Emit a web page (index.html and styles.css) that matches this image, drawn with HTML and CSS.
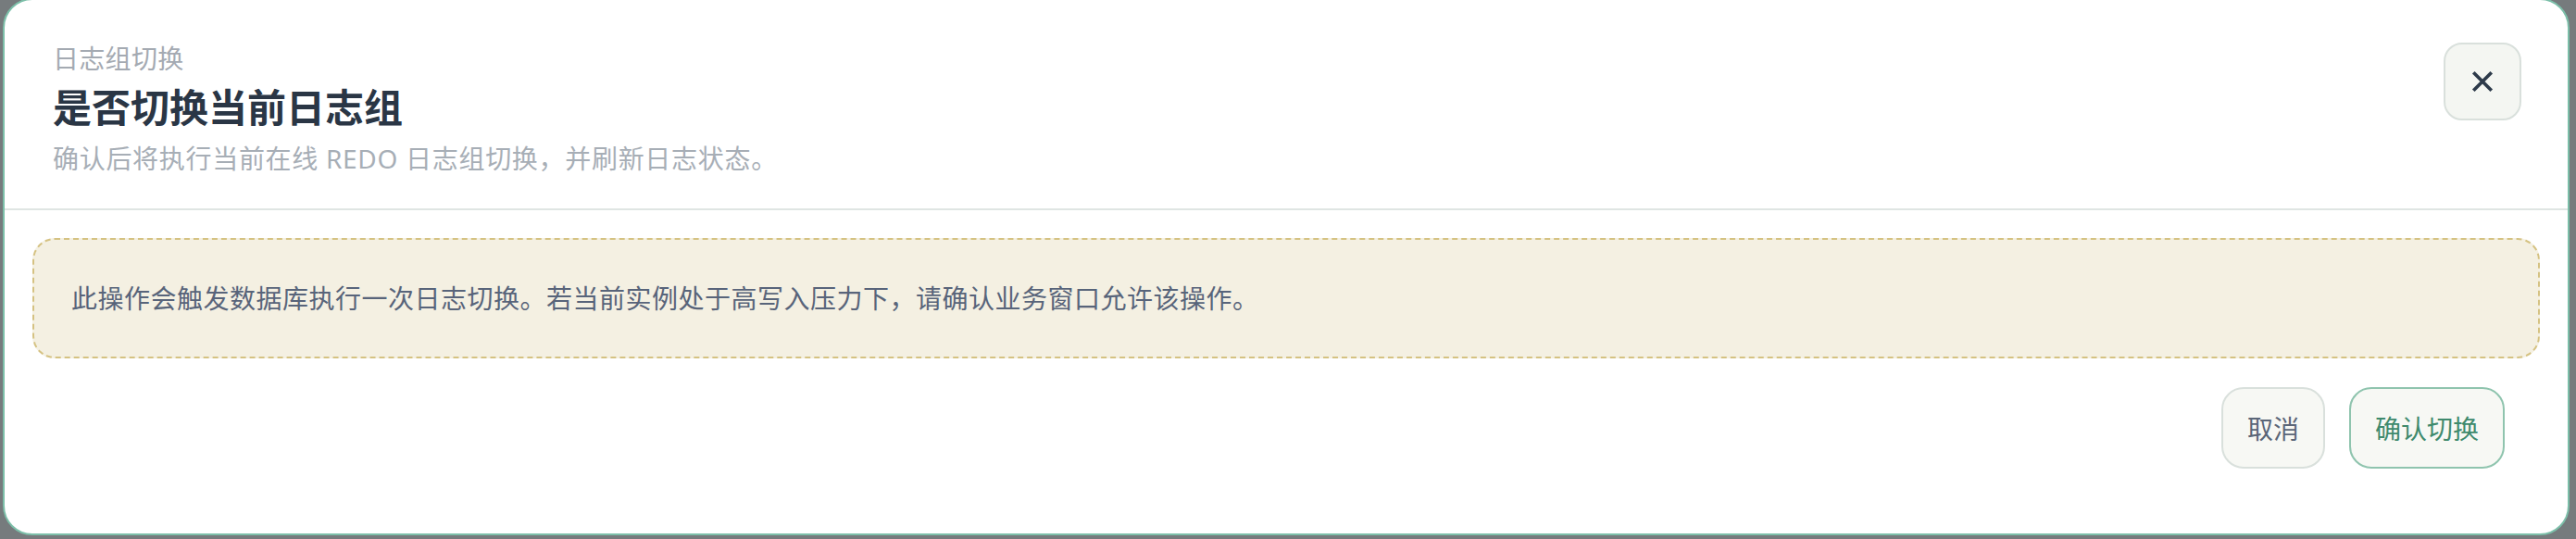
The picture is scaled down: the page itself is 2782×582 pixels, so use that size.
FILE: index.html
```html
<!DOCTYPE html>
<html lang="zh-CN">
<head>
<meta charset="UTF-8" />
<meta name="viewport" content="width=device-width, initial-scale=1" />
<title>日志组切换</title>
<link rel="stylesheet" href="styles.css">
</head>
<body>

<div class="dialog">
  <header class="dialog-head">
    <div class="head-text">
      <div class="eyebrow">日志组切换</div>
      <h2>是否切换当前日志组</h2>
      <p class="lead">确认后将执行当前在线 REDO 日志组切换，并刷新日志状态。</p>
    </div>
    <button class="close" aria-label="关闭">
      <svg viewBox="0 0 24 24" width="26" height="26">
        <path d="M3 3 L21 21 M21 3 L3 21" />
      </svg>
    </button>
  </header>

  <div class="dialog-body">
    <div class="warning">此操作会触发数据库执行一次日志切换。若当前实例处于高写入压力下，请确认业务窗口允许该操作。</div>
  </div>

  <footer class="dialog-foot">
    <button class="btn">取消</button>
    <button class="btn btn-primary">确认切换</button>
  </footer>
</div>

</body>
</html>
```

FILE: styles.css
```css
html, body {
  height: 100%;
}
body {
  margin: 0;
  background: #767b7d;
  font-family: "Noto Sans", "Noto Sans CJK SC", sans-serif;
  overflow: hidden;
}
.dialog {
  box-sizing: border-box;
  width: 2772px;
  height: 580px;
  margin: -2px 0 0 3px;
  background: #fff;
  border: 2px solid #7cbfa9;
  border-radius: 32px;
  display: flex;
  flex-direction: column;
}

/* header */
.dialog-head {
  display: flex;
  justify-content: space-between;
  align-items: flex-start;
  padding: 45px 50px 34px 52px;
  border-bottom: 2px solid #dfe5e3;
}
.head-text {
  display: flex;
  flex-direction: column;
  gap: 9px;
}
.eyebrow {
  font-size: 28px;
  line-height: 36px;
  color: #a4aab2;
  letter-spacing: 0.3px;
}
h2 {
  margin: 0;
  font-size: 42px;
  line-height: 52px;
  font-weight: 700;
  color: #2a3645;
}
.lead {
  margin: 0;
  font-size: 28px;
  line-height: 40px;
  color: #a7aeb6;
  letter-spacing: 0.7px;
}
.close {
  box-sizing: border-box;
  width: 84px;
  height: 84px;
  margin-top: 1px;
  border: 2px solid #d9e0dc;
  border-radius: 20px;
  background: #f4f6f2;
  display: flex;
  align-items: center;
  justify-content: center;
  padding: 0;
  cursor: pointer;
}
.close svg path {
  fill: none;
  stroke: #2d3a4a;
  stroke-width: 3.4;
}

/* body */
.dialog-body {
  padding: 30px 30px 0;
}
.warning {
  padding: 40px 40px;
  font-size: 28px;
  line-height: 46px;
  color: #58647a;
  letter-spacing: 0.5px;
  background: #f4f0e2;
  border: 2px dashed #d5c282;
  border-radius: 24px;
}

/* footer */
.dialog-foot {
  display: flex;
  justify-content: flex-end;
  gap: 26px;
  padding: 31px 68px 0;
}
.btn {
  box-sizing: border-box;
  height: 88px;
  padding: 0 26px;
  font-family: inherit;
  font-size: 28px;
  color: #5b6678;
  background: #f7f8f4;
  border: 2px solid #d9e0dc;
  border-radius: 24px;
  cursor: pointer;
}
.btn-primary {
  color: #3f8a6d;
  border-color: #8fc4ae;
}
```
